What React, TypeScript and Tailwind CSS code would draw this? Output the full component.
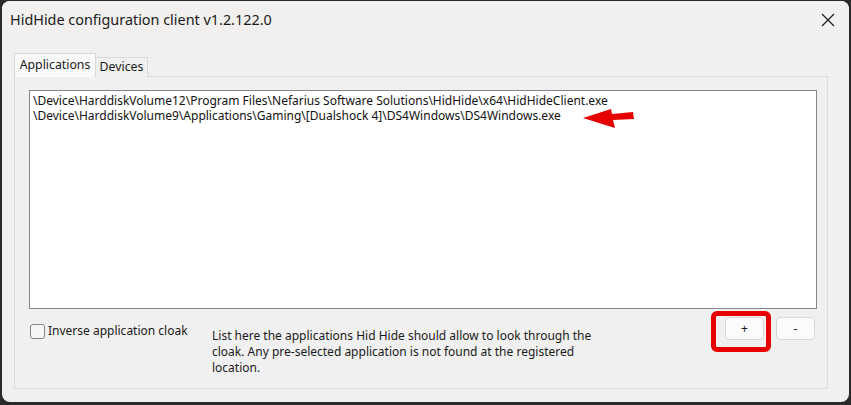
import React from "react";

const font = { fontFamily: '"Noto Sans", "Open Sans", sans-serif' };

export default function App() {
  return (
    <div
      className="w-[851px] h-[405px] bg-[#2a2a2a] pt-px pl-[2px] pr-[2px] pb-[3px] overflow-hidden"
      style={font}
    >
      <div className="relative w-full h-full bg-[#f0f0f0] rounded-[8px] flex flex-col overflow-hidden">
        {/* Title bar */}
        <div className="h-[38px] bg-[#f2f0ee] flex items-center justify-between pl-[8px] pr-[14px]">
          <span className="text-[14.4px] text-[#1a1a1a]">
            HidHide configuration client v1.2.122.0
          </span>
          <svg width="14" height="14" viewBox="0 0 14 14" className="mt-[-1px]">
            <path d="M1 1 L13 13 M13 1 L1 13" stroke="#1a1a1a" strokeWidth="1.1" fill="none" />
          </svg>
        </div>

        {/* Tabs */}
        <div className="flex items-end ml-[12px] mt-[14px] relative z-10">
          <div className="h-[24px] w-[82px] bg-[#f9f9f9] border border-[#d9d9d9] border-b-0 flex items-center justify-center text-[12.3px] text-[#1a1a1a]">
            Applications
          </div>
          <div className="h-[20px] w-[52px] bg-[#f0f0f0] border border-[#d9d9d9] border-l-0 border-b-0 flex items-center justify-center text-[12.3px] text-[#1a1a1a]">
            Devices
          </div>
        </div>

        {/* Panel */}
        <div className="ml-[12px] w-[814px] h-[313px] mt-[-1px] border border-[#dadada] bg-[#f0f0f0] flex flex-col pl-[14px] pr-[10px] pt-[13px]">
          <div className="relative h-[219px] bg-white border border-[#828790] pl-[3px] pt-[2px] text-[12px] leading-[15px] text-[#111]">
            <div className="h-[15px] whitespace-nowrap">\Device\HarddiskVolume12\Program Files\Nefarius Software Solutions\HidHide\x64\HidHideClient.exe</div>
            <div className="h-[15px] whitespace-nowrap">\Device\HarddiskVolume9\Applications\Gaming\[Dualshock 4]\DS4Windows\DS4Windows.exe</div>
            <svg
              className="absolute left-[552px] top-[18px]"
              width="56"
              height="22"
              viewBox="0 0 56 22"
            >
              <polygon
                points="1,9 29,0 30,5 51,3 52,10 31,11 33,19"
                fill="#e60000"
              />
            </svg>
          </div>

          <div className="flex mt-[8px]">
            <label className="flex items-center gap-[3px] mt-[6px] w-[183px] h-[16px] text-[12px] text-[#1a1a1a]">
              <span className="w-[15px] h-[15px] ml-px rounded-[3px] border border-[#858585] bg-[#f6f6f6]" />
              <span>Inverse application cloak</span>
            </label>
            <div className="w-[400px] mt-[11px] text-[12px] leading-[16px] text-[#1a1a1a]">
              List here the applications Hid Hide should allow to look through the
              <br />
              cloak. Any pre-selected application is not found at the registered
              <br />
              location.
            </div>
            <div className="flex-1" />
            <div className="flex gap-[12px] mr-[2px]">
              <div className="relative">
                <button className="w-[39px] h-[23px] bg-[#fbfbfb] border border-[#d6d6d6] rounded-[4px] text-[12px] text-[#1a1a1a] flex items-center justify-center">
                  +
                </button>
                <div className="absolute left-[-14px] top-[-6px] w-[60px] h-[41px] border-[5px] border-[#e80000] rounded-[6px]" />
              </div>
              <button className="w-[39px] h-[23px] bg-[#fbfbfb] border border-[#d6d6d6] rounded-[4px] text-[12px] text-[#1a1a1a] flex items-center justify-center">
                -
              </button>
            </div>
          </div>
        </div>
      </div>
    </div>
  );
}
